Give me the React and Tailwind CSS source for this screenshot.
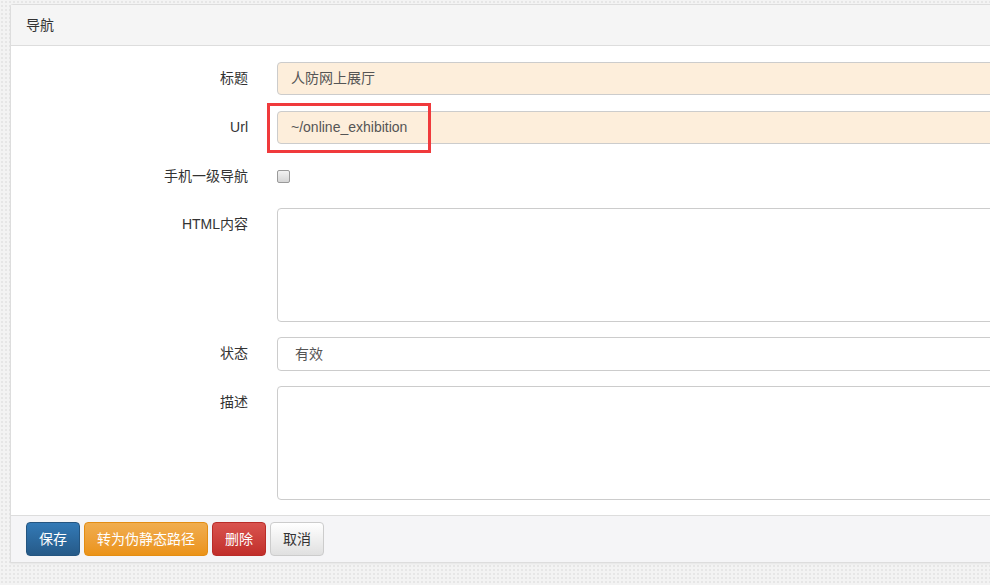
const FONT = { fontFamily: '"Liberation Sans", "Noto Sans CJK SC", sans-serif' };

const Label = ({ children }) => (
  <div className="w-[237px] shrink-0 text-right text-[14px] leading-[33px] text-[#333]">{children}</div>
);

const Row = ({ label, children, className = '' }) => (
  <div className={`flex ${className}`}>
    <Label>{label}</Label>
    <div className="ml-[29px] flex-1 pr-[15px]">{children}</div>
  </div>
);

const Button = ({ children, variant }) => {
  const cls = {
    primary: 'bg-gradient-to-b from-[#337ab7] to-[#265a88] border-[#245580] text-white',
    warning: 'bg-gradient-to-b from-[#f0ad4e] to-[#eb9316] border-[#e38d13] text-white',
    danger: 'bg-gradient-to-b from-[#d9534f] to-[#c12e2a] border-[#b92c28] text-white',
    default: 'bg-gradient-to-b from-white to-[#e0e0e0] border-[#ccc] text-[#333]',
  };
  return (
    <button className={`h-[34px] px-[12px] rounded-[4px] border text-[14px] leading-[20px] ${cls[variant]}`}>
      {children}
    </button>
  );
};

export default function App() {
  return (
    <div
      className="w-[990px] h-[585px] overflow-hidden bg-[#f3f3f3] bg-[radial-gradient(#e6e6e6_1px,transparent_1px)] bg-[length:4px_4px] pt-[4px] pl-[10px]"
      style={FONT}
    >
      <div className="w-[1100px] bg-white border border-[#ddd] rounded-tl-[3px] shadow-[0_1px_2px_rgba(0,0,0,0.05)]">
        {/* Header */}
        <div className="h-[41px] bg-[#f5f5f5] border-b border-[#ddd] px-[15px] flex items-center text-[14px] text-[#333]">
          导航
        </div>

        {/* Form */}
        <div className="pt-[16px] pb-[15px] flex flex-col">
          <Row label="标题">
            <div className="h-[33px] rounded-[4px] border border-[#ccc] bg-[#fdeedb] pl-[13px] text-[14px] leading-[31px] text-[#555]">
              人防网上展厅
            </div>
          </Row>

          <Row label="Url" className="mt-[16px]">
            <div className="relative">
              <div className="h-[33px] rounded-[4px] border border-[#ccc] bg-[#fdeedb] pl-[13px] text-[14px] leading-[31px] text-[#555]">
                ~/online_exhibition
              </div>
              <div className="absolute left-[-10px] top-[-8px] w-[164px] h-[50px] border-[3px] border-[#f03a3c]" />
            </div>
          </Row>

          <Row label="手机一级导航" className="mt-[16px]">
            <div className="h-[32px] flex items-center">
              <div className="w-[13px] h-[13px] rounded-[2px] border border-[#9a9a9a] bg-gradient-to-b from-[#f2f2f2] to-[#d6d6d6]" />
            </div>
          </Row>

          <Row label="HTML内容" className="mt-[15px]">
            <div className="h-[114px] rounded-[4px] border border-[#ccc] bg-white" />
          </Row>

          <Row label="状态" className="mt-[15px]">
            <div className="h-[34px] rounded-[4px] border border-[#ccc] bg-white pl-[17px] text-[14px] leading-[32px] text-[#555]">
              有效
            </div>
          </Row>

          <Row label="描述" className="mt-[15px]">
            <div className="h-[114px] rounded-[4px] border border-[#ccc] bg-white" />
          </Row>
        </div>

        {/* Footer */}
        <div className="h-[47px] bg-[#f5f5f7] border-t border-[#ddd] px-[15px] flex items-center gap-[4px]">
          <Button variant="primary">保存</Button>
          <Button variant="warning">转为伪静态路径</Button>
          <Button variant="danger">删除</Button>
          <Button variant="default">取消</Button>
        </div>
      </div>
    </div>
  );
}
